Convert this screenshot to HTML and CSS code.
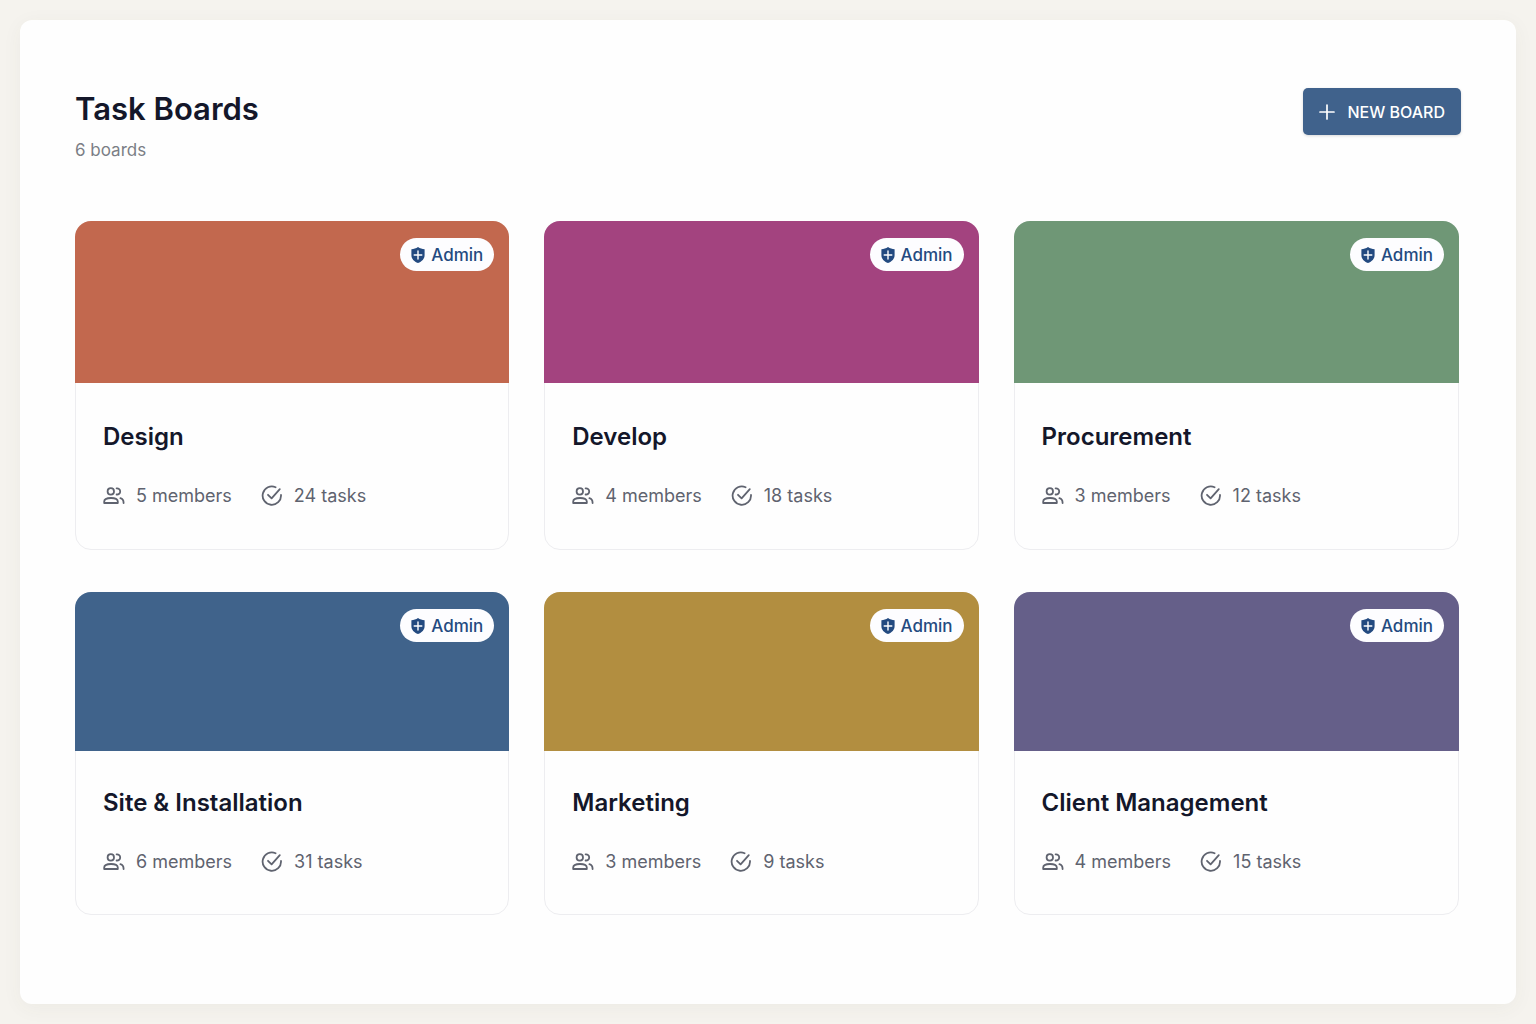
FILE: index.html
```html
<!DOCTYPE html>
<html lang="en">
<head>
    <meta charset="UTF-8">
    <meta name="viewport" content="width=device-width, initial-scale=1.0">
    <title>Task Boards</title>
    <link rel="stylesheet" href="styles.css">
</head>
<body>

    <!-- Shared icons -->
    <svg class="icon-defs" aria-hidden="true">
        <symbol id="icon-shield" viewBox="0 0 14 16">
            <path fill="#234a80" d="M7 0 C5 1.4 2.8 2 0.4 2.2 V8 C0.4 11.8 3 14.6 7 16 C11 14.6 13.6 11.8 13.6 8 V2.2 C11.2 2 9 1.4 7 0 Z"/>
            <path stroke="#fff" stroke-width="1.4" stroke-linecap="round" d="M7 4 V12 M3.2 8 H10.8"/>
        </symbol>
        <symbol id="icon-members" viewBox="0 0 22 18">
            <g fill="none" stroke="currentColor" stroke-width="1.8" stroke-linecap="round" stroke-linejoin="round">
                <circle cx="7.8" cy="4.4" r="3.2"/>
                <path d="M1.2 16 V14.6 C1.2 12.2 3.6 11 8 11 C12.4 11 14.8 12.2 14.8 14.6 V16 Z"/>
                <path d="M13.6 1.3 C15.7 1.1 17.2 2.5 17.2 4.4 C17.2 6.3 15.7 7.7 13.6 7.5"/>
                <path d="M17.4 11.2 C19.6 11.8 20.6 13.4 20.6 16"/>
            </g>
        </symbol>
        <symbol id="icon-check" viewBox="0 0 22 22">
            <g fill="none" stroke="currentColor" stroke-width="1.8" stroke-linecap="round" stroke-linejoin="round">
                <path d="M14.6 2.2 A9.2 9.2 0 1 0 20 10"/>
                <path d="M7 9.8 L10.6 13.4 L18.8 4.2"/>
            </g>
        </symbol>
    </svg>

    <main class="panel">
        <header class="page-header">
            <div>
                <h1>Task Boards</h1>
                <p class="board-count">6 boards</p>
            </div>
            <button type="button" class="new-board">
                <svg width="16" height="16" viewBox="0 0 16 16" aria-hidden="true">
                    <path stroke="#fff" stroke-width="1.7" stroke-linecap="round" d="M8 1 V15 M1 8 H15"/>
                </svg>
                NEW BOARD
            </button>
        </header>

        <section class="boards">
            <article class="board">
                <div class="cover orange">
                    <span class="badge"><svg class="shield"><use href="#icon-shield"/></svg>Admin</span>
                </div>
                <div class="board-body">
                    <h2>Design</h2>
                    <div class="meta">
                        <span class="stat"><svg class="members"><use href="#icon-members"/></svg>5 members</span>
                        <span class="stat"><svg class="check"><use href="#icon-check"/></svg>24 tasks</span>
                    </div>
                </div>
            </article>

            <article class="board">
                <div class="cover magenta">
                    <span class="badge"><svg class="shield"><use href="#icon-shield"/></svg>Admin</span>
                </div>
                <div class="board-body">
                    <h2>Develop</h2>
                    <div class="meta">
                        <span class="stat"><svg class="members"><use href="#icon-members"/></svg>4 members</span>
                        <span class="stat"><svg class="check"><use href="#icon-check"/></svg>18 tasks</span>
                    </div>
                </div>
            </article>

            <article class="board">
                <div class="cover green">
                    <span class="badge"><svg class="shield"><use href="#icon-shield"/></svg>Admin</span>
                </div>
                <div class="board-body">
                    <h2>Procurement</h2>
                    <div class="meta">
                        <span class="stat"><svg class="members"><use href="#icon-members"/></svg>3 members</span>
                        <span class="stat"><svg class="check"><use href="#icon-check"/></svg>12 tasks</span>
                    </div>
                </div>
            </article>

            <article class="board short">
                <div class="cover blue">
                    <span class="badge"><svg class="shield"><use href="#icon-shield"/></svg>Admin</span>
                </div>
                <div class="board-body">
                    <h2>Site &amp; Installation</h2>
                    <div class="meta">
                        <span class="stat"><svg class="members"><use href="#icon-members"/></svg>6 members</span>
                        <span class="stat"><svg class="check"><use href="#icon-check"/></svg>31 tasks</span>
                    </div>
                </div>
            </article>

            <article class="board short">
                <div class="cover gold">
                    <span class="badge"><svg class="shield"><use href="#icon-shield"/></svg>Admin</span>
                </div>
                <div class="board-body">
                    <h2>Marketing</h2>
                    <div class="meta">
                        <span class="stat"><svg class="members"><use href="#icon-members"/></svg>3 members</span>
                        <span class="stat"><svg class="check"><use href="#icon-check"/></svg>9 tasks</span>
                    </div>
                </div>
            </article>

            <article class="board short">
                <div class="cover purple">
                    <span class="badge"><svg class="shield"><use href="#icon-shield"/></svg>Admin</span>
                </div>
                <div class="board-body">
                    <h2>Client Management</h2>
                    <div class="meta">
                        <span class="stat"><svg class="members"><use href="#icon-members"/></svg>4 members</span>
                        <span class="stat"><svg class="check"><use href="#icon-check"/></svg>15 tasks</span>
                    </div>
                </div>
            </article>
        </section>
    </main>

</body>
</html>
```
FILE: styles.css
```css
/* General Styles */
* {
    box-sizing: border-box;
}

body {
    margin: 0;
    padding: 20px;
    min-height: 100vh;
    display: flex;
    font-family: Inter, "Liberation Sans", sans-serif;
    background-color: #f5f3ee;
    color: #14172a;
}

h1, h2, p {
    margin: 0;
}

svg {
    flex: none;
}

.icon-defs {
    position: absolute;
    width: 0;
    height: 0;
}

.panel {
    flex: 1;
    padding: 68px 55px;
    background: #fefefe;
    border-radius: 12px;
    box-shadow: 0 4px 20px rgba(80, 80, 60, 0.05);
}

/* Header */
.page-header {
    display: flex;
    justify-content: space-between;
    align-items: flex-start;
    margin-bottom: 59px;
}

h1 {
    font-size: 31px;
    line-height: 42px;
    font-weight: 600;
}

.board-count {
    margin-top: 8px;
    font-size: 17px;
    line-height: 24px;
    color: #7b7e86;
}

.new-board {
    display: flex;
    align-items: center;
    gap: 12px;
    height: 47px;
    padding: 0 16px;
    border: none;
    border-radius: 5px;
    background: #40628c;
    box-shadow: 0 1px 3px rgba(0, 0, 0, 0.15);
    color: white;
    font-family: inherit;
    font-size: 16px;
    font-weight: 500;
    cursor: pointer;
}

/* Board grid */
.boards {
    display: grid;
    grid-template-columns: 39fr 39fr 40fr;
    gap: 42px 35px;
    margin-right: 2px;
}

.board {
    border: 1px solid #ededf0;
    border-radius: 16px;
    background: #fefefe;
}

.cover {
    display: flex;
    justify-content: flex-end;
    align-items: flex-start;
    height: 162px;
    margin: -1px -1px 0;
    padding: 17px 15px;
    border-radius: 16px 16px 0 0;
}

.short .cover {
    height: 159px;
}

.orange { background: #c2684e; }
.magenta { background: #a3437f; }
.green { background: #6f9776; }
.blue { background: #40638b; }
.gold { background: #b28e40; }
.purple { background: #655f89; }

.badge {
    display: flex;
    align-items: center;
    gap: 6px;
    height: 33px;
    padding: 0 11px;
    border-radius: 17px;
    background: #fdfdff;
    color: #234a80;
    font-size: 17px;
    font-weight: 500;
}

.shield {
    width: 14px;
    height: 16px;
}

.board-body {
    padding: 38px 27px 41px;
}

.short .board-body {
    padding: 36px 27px 40px;
}

h2 {
    font-size: 24px;
    line-height: 32px;
    font-weight: 600;
}

.meta {
    display: flex;
    gap: 29px;
    margin-top: 31px;
    color: #5f636f;
    font-size: 18px;
    line-height: 24px;
}

.stat {
    display: flex;
    align-items: center;
    gap: 11px;
}

.members {
    width: 22px;
    height: 18px;
}

.check {
    width: 22px;
    height: 22px;
}
```
